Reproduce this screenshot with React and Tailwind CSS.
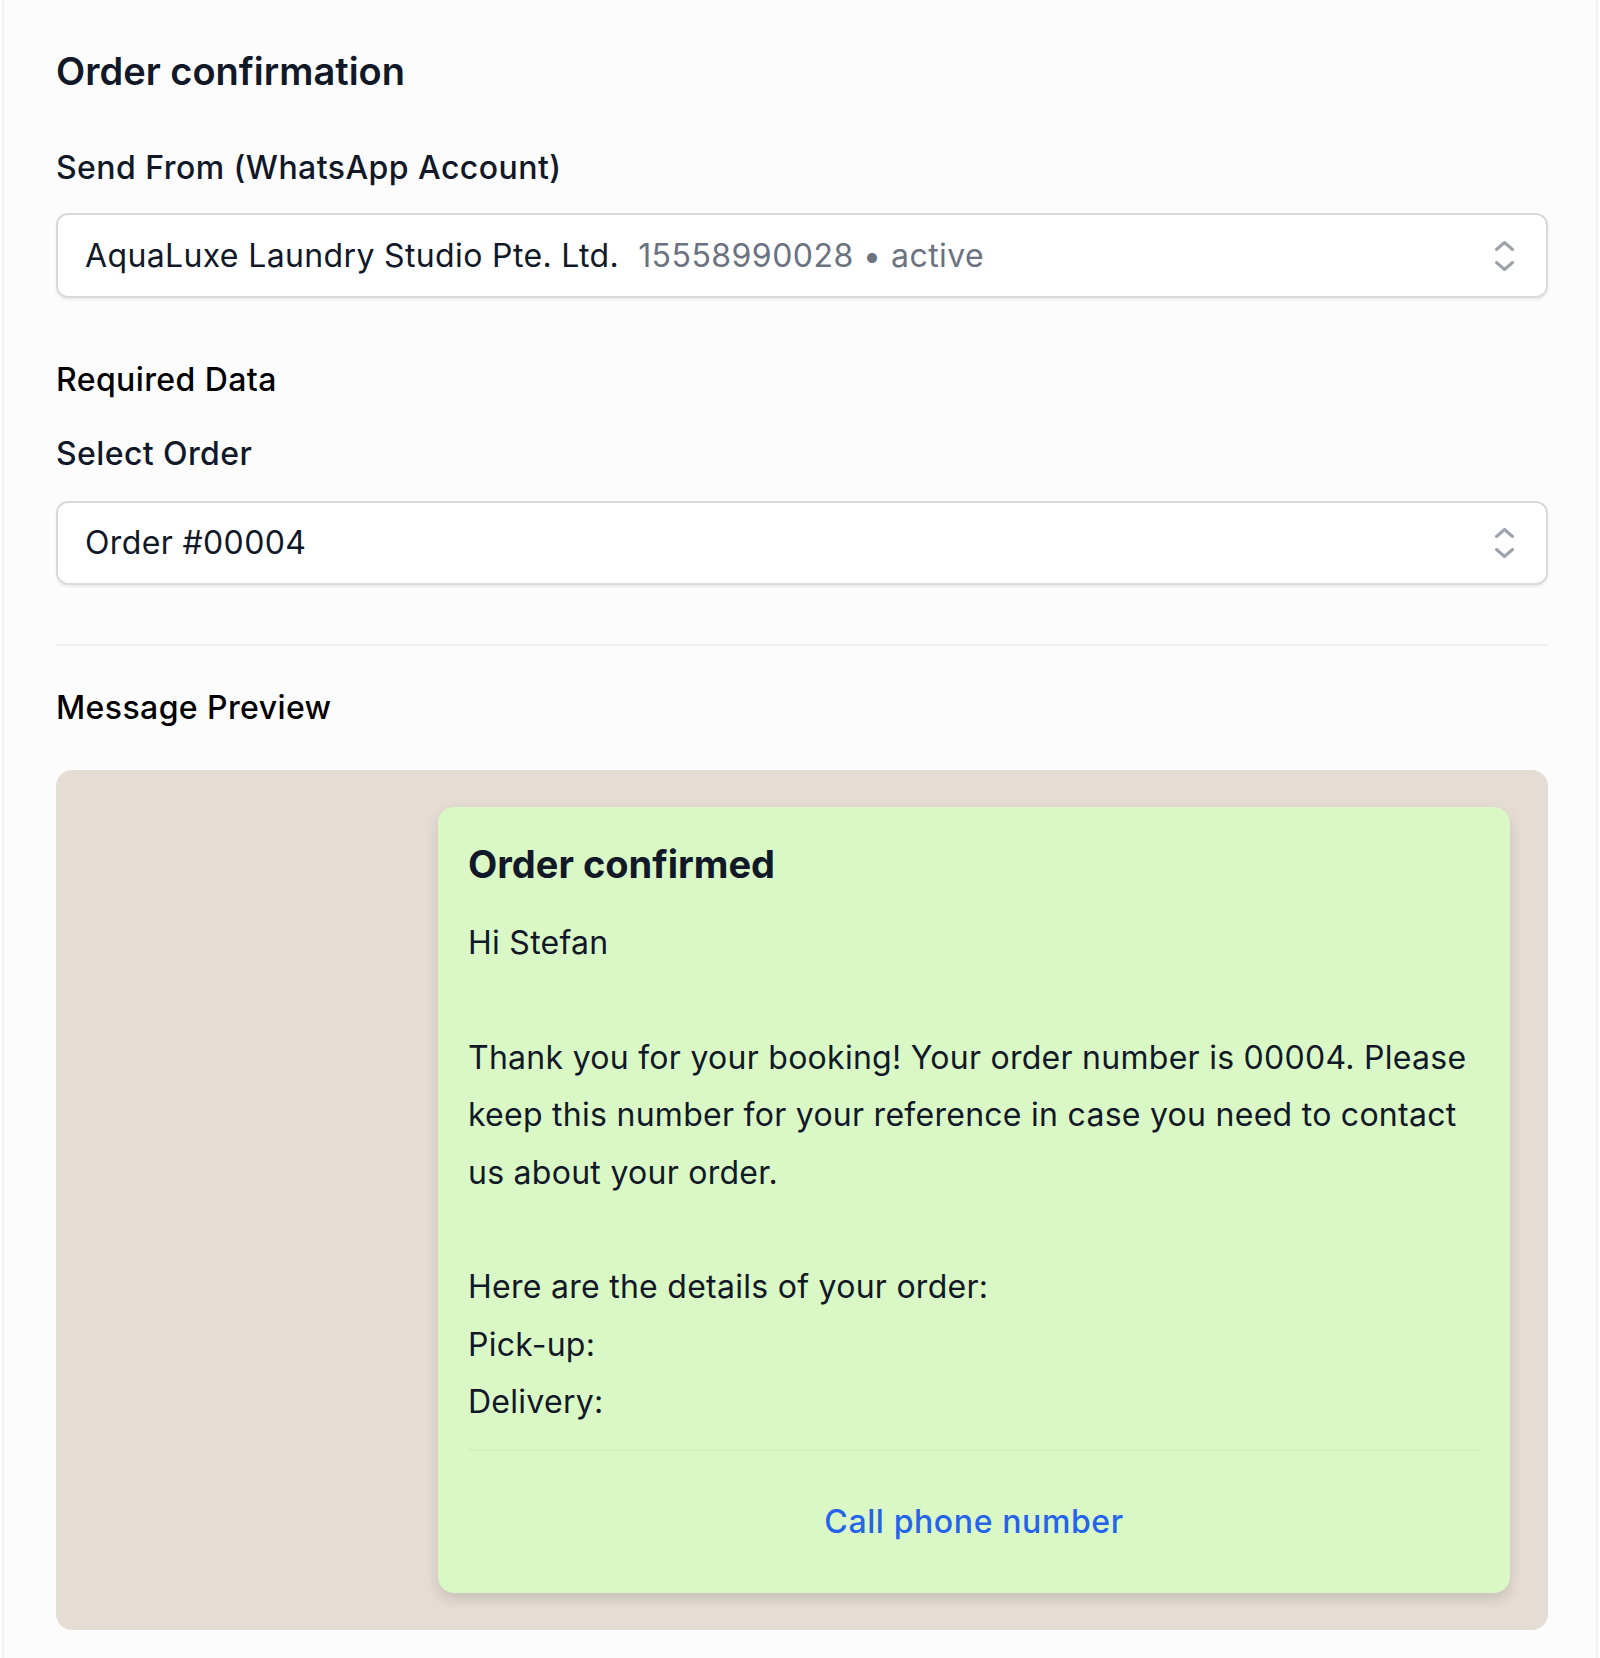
import React from "react";

function UpDown() {
  return (
    <svg width="19" height="30" viewBox="0 0 19 30" fill="none" stroke="#9ca3af" strokeWidth="3" strokeLinecap="round" strokeLinejoin="round">
      <path d="M1.5 8.5 L9.5 1.5 L17.5 8.5" />
      <path d="M1.5 21.5 L9.5 28.5 L17.5 21.5" />
    </svg>
  );
}

export default function App() {
  const body = `Hi Stefan

Thank you for your booking! Your order number is 00004. Please keep this number for your reference in case you need to contact us about your order.

Here are the details of your order:
Pick-up:
Delivery:`;
  return (
    <div className="w-[1600px] min-h-[1658px] bg-white" style={{ fontFamily: "Inter, 'Noto Sans', sans-serif" }}>
      <div className="mx-[2px] min-h-[1658px] border-x-2 border-[#f1f1f2] bg-[#fcfcfc] pl-[52px] pr-[48px] pt-[48px] pb-[26px]">
        <h1 className="text-[38px] leading-[46px] font-semibold text-[#111827]">Order confirmation</h1>

        <div className="mt-[54px] text-[32px] leading-[40px] font-medium text-[#111827] tracking-[0.45px]">Send From (WhatsApp Account)</div>
        <div className="mt-[25px] h-[85px] flex items-center justify-between rounded-[12px] border-2 border-[#dadade] bg-white pl-[27px] pr-[32px] shadow-[0_2px_3px_rgba(0,0,0,0.07)]">
          <div className="text-[32px] leading-[40px] text-[#111827] tracking-[0.36px]">
            AquaLuxe Laundry Studio Pte. Ltd.
            <span className="ml-[19px] text-[#6b7280] tracking-[0.45px]">15558990028 • active</span>
          </div>
          <UpDown />
        </div>

        <div className="mt-[62px] text-[32px] leading-[40px] font-medium text-black tracking-[0.4px]">Required Data</div>
        <div className="mt-[34px] text-[32px] leading-[40px] font-medium text-[#111827] tracking-[0.4px]">Select Order</div>
        <div className="mt-[27px] h-[84px] flex items-center justify-between rounded-[12px] border-2 border-[#dadade] bg-white pl-[27px] pr-[32px] shadow-[0_2px_3px_rgba(0,0,0,0.07)]">
          <div className="text-[32px] leading-[40px] text-[#111827] tracking-[0.36px]">Order #00004</div>
          <UpDown />
        </div>

        <div className="mt-[59px] h-[2px] bg-[#eeeff1]" />

        <div className="mt-[42px] text-[32px] leading-[40px] font-medium text-black tracking-[0.4px]">Message Preview</div>

        <div className="mt-[42px] h-[860px] rounded-[16px] bg-[#e5ddd4] pt-[37px] pr-[38px] flex justify-end">
          <div className="w-[1072px] h-[786px] rounded-[16px] bg-[#daf7c6] shadow-[0_6px_14px_rgba(0,0,0,0.13)] pt-[34px] px-[30px] flex flex-col">
            <div className="text-[38px] leading-[46px] font-bold text-[#111827]">Order confirmed</div>
            <div className="mt-[27px] whitespace-pre-line text-[32px] leading-[57.4px] text-[#111827] tracking-[0.27px]">{body}</div>
            <div className="mt-[18px] h-[2px] bg-[#d3f0bf]" />
            <div className="flex-1 flex items-center justify-center">
              <span className="text-[32px] leading-[40px] font-medium text-[#2563eb] tracking-[0.6px]">Call phone number</span>
            </div>
          </div>
        </div>
      </div>
    </div>
  );
}
